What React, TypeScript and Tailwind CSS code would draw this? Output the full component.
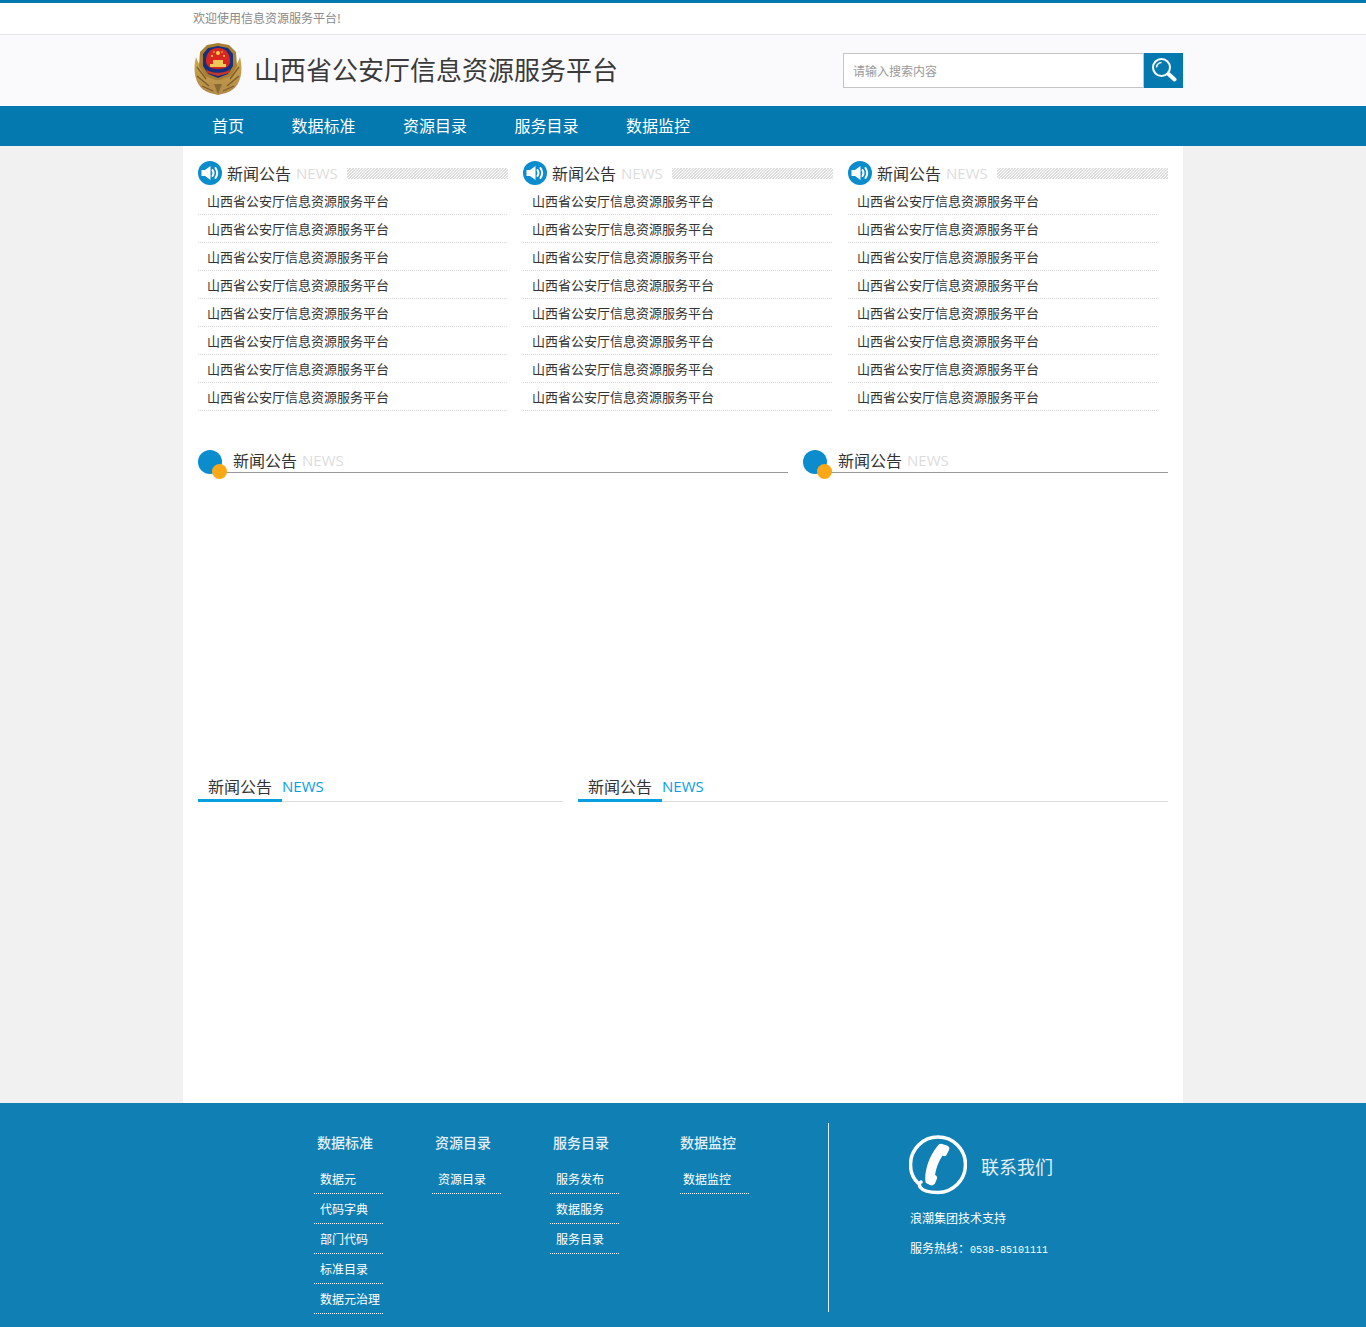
const NAV = ["首页", "数据标准", "资源目录", "服务目录", "数据监控"];
const ROWS = Array.from({ length: 8 }, (_, i) => i);

const FOOTER = [
  { title: "数据标准", box: "w-[118px]", head: "pl-[3px]", item: "pl-[6px]", items: ["数据元", "代码字典", "部门代码", "标准目录", "数据元治理"] },
  { title: "资源目录", box: "w-[118px]", head: "pl-[3px]", item: "pl-[6px]", items: ["资源目录"] },
  { title: "服务目录", box: "w-[130px]", head: "pl-[3px]", item: "pl-[6px]", items: ["服务发布", "数据服务", "服务目录"] },
  { title: "数据监控", box: "w-[69px]", head: "pl-0", item: "pl-[3px]", items: ["数据监控"] },
];

const Emblem = () => (
  <svg width="50" height="52" viewBox="0 0 50 52">
    <defs>
      <linearGradient id="gold" x1="0" y1="0" x2="0" y2="1">
        <stop offset="0" stopColor="#cfa84f" />
        <stop offset="1" stopColor="#b08a4a" />
      </linearGradient>
    </defs>
    <path d="M3 14C-1 30 3 46 17 50L25 52L33 50C47 46 51 30 47 14C44 22 40 30 25 38C10 30 6 22 3 14Z" fill="url(#gold)" />
    <path d="M4 24L13 36M4 33L16 43M9 43L20 48M46 24L37 36M46 33L34 43M41 43L30 48" stroke="#7d5c28" strokeWidth="1.3" fill="none" />
    <path d="M25 0L36 2L43 9L44 23L38 33L25 38L12 33L6 23L7 9L14 2Z" fill="#a97f34" />
    <path d="M25 3L35 5L40 11L40 23L35 31L25 35L15 31L10 23L10 11L15 5Z" fill="#17307d" />
    <path d="M25 5C33 5 37 11 37 18C37 23 33 26 25 26C17 26 13 23 13 18C13 11 17 5 25 5Z" fill="#d9271f" />
    <circle cx="25" cy="10" r="2" fill="#f3d24a" />
    <circle cx="19" cy="13" r="1" fill="#f3d24a" />
    <circle cx="31" cy="13" r="1" fill="#f3d24a" />
    <circle cx="21" cy="9" r="0.8" fill="#f3d24a" />
    <circle cx="29" cy="9" r="0.8" fill="#f3d24a" />
    <path d="M17 21H33V24H17ZM20 17H30V21H20Z" fill="#edc95a" />
    <path d="M13 26C17 31 33 31 37 26L36 30L25 33L14 30Z" fill="#c6372a" />
    <path d="M21 41L25 51L29 41Z" fill="#8a6a2e" />
  </svg>
);

const SearchIcon = () => (
  <svg width="26" height="26" viewBox="0 0 26 26" fill="none">
    <circle cx="10.5" cy="10.5" r="8.5" stroke="#fff" strokeWidth="2" />
    <path d="M5.5 10.5A5 5 0 0 1 10.5 5.5" stroke="#fff" strokeWidth="1.5" />
    <path d="M17.5 17L23.5 22.5" stroke="#fff" strokeWidth="4" strokeLinecap="round" />
  </svg>
);

const Speaker = () => (
  <span className="-mt-[2px] flex h-6 w-6 shrink-0 items-center justify-center rounded-full bg-[#0a8ccd]">
    <svg width="18" height="16" viewBox="0 0 18 16" fill="none">
      <path d="M0.5 5H4L9.5 1V15L4 11H0.5Z" fill="#fff" />
      <path d="M11.5 5C12.7 6.8 12.7 9.2 11.5 11" stroke="#fff" strokeWidth="2" strokeLinecap="round" />
      <path d="M14.5 3C16.5 6 16.5 10 14.5 13" stroke="#fff" strokeWidth="2" strokeLinecap="round" />
    </svg>
  </span>
);

const Phone = () => (
  <svg width="58" height="60" viewBox="0 0 58 60" fill="none">
    <path d="M9 48C3.5 43 1.5 36 1.5 29.5C1.5 14 14 2 29 2C44 2 56.5 14 56.5 29.5C56.5 45 44 57.5 29 57.5C22 57.5 15 57 11.5 52.5C10 50.5 10 48 12 47" stroke="#fff" strokeWidth="3.5" strokeLinecap="round" />
    <path d="M33 9L38 10.5C40 11 41 13 40 15L37.5 20C36.5 21.5 34.5 21.5 33.5 20.5C29.5 27 27 33 26 40C27.5 40.5 28.5 42 28 43.5L26 48.5C25 50 23 51 21 50L17 48C15 43 17 25 28.5 11C30 9 31.5 8.5 33 9Z" fill="#fff" />
  </svg>
);

const NewsColumn = ({ wide }: { wide?: boolean }) => (
  <div className={wide ? "w-[320px]" : "w-[310px]"}>
    <div className="flex h-[27px] items-center">
      <Speaker />
      <span className="-mt-[2px] ml-[5px] text-base text-[#333]">新闻公告</span>
      <span className="ml-[5px] font-['Open_Sans',sans-serif] text-[15px] text-[#dddddd]">NEWS</span>
      <span className="ml-[9px] h-[11px] flex-1 bg-[repeating-linear-gradient(135deg,#dedede_0,#dedede_0.9px,#ffffff_0.9px,#ffffff_2.1213px)]" />
    </div>
    <ul className="w-[309px]">
      {ROWS.map((r) => (
        <li key={r} className="h-[28px] border-b border-dotted border-[#d8d8d8] pl-[9px] text-[13px] leading-[28px] text-[#333]">
          山西省公安厅信息资源服务平台
        </li>
      ))}
    </ul>
  </div>
);

const DotHeading = ({ width }: { width: string }) => (
  <div className={`${width} relative h-[25px]`}>
    <div className="ml-[25px] flex h-[23px] items-center border-b border-[#999] pl-[10px]">
      <span className="-mt-[2px] text-base text-[#333]">新闻公告</span>
      <span className="-mt-[2px] ml-[5px] font-['Open_Sans',sans-serif] text-[15px] text-[#dddddd]">NEWS</span>
    </div>
    <span className="absolute left-0 top-0 h-6 w-6 rounded-full bg-[#0a8ccd]" />
    <span className="absolute left-[14px] top-[14px] h-[15px] w-[15px] rounded-full bg-[#fba816]" />
  </div>
);

const TabHeading = ({ width }: { width: string }) => (
  <div className={`${width} border-b border-[#dddddd]`}>
    <div className="-mb-px flex h-[28px] w-[84px] items-center border-b-[3px] border-[#069fe0] pl-[10px]">
      <span className="-mt-[2px] shrink-0 text-base text-[#333]">新闻公告</span>
      <span className="ml-[10px] shrink-0 font-['Open_Sans',sans-serif] text-[15px] text-[#069fe0]">NEWS</span>
    </div>
  </div>
);

export default function App() {
  return (
    <div className="bg-[#f1f1f1] font-['Noto_Sans_CJK_SC','Liberation_Sans',sans-serif]">
      <div className="h-[35px] border-t-[3px] border-b border-t-[#0479b0] border-b-[#e6e6e9] bg-white">
        <div className="mx-auto w-[1000px] pl-[10px] text-xs leading-[30px] text-[#888]">欢迎使用信息资源服务平台!</div>
      </div>

      <div className="h-[71px] bg-[#fafafd]">
        <div className="mx-auto flex h-full w-[1000px] items-center pl-[10px]">
          <div className="-mt-[4px]">
            <Emblem />
          </div>
          <h1 className="-mt-[4px] ml-[11px] text-[26px] font-normal leading-none text-[#3a3a3a]">山西省公安厅信息资源服务平台</h1>
          <div className="-mt-[1px] ml-auto flex h-[35px]">
            <input
              placeholder="请输入搜索内容"
              className="h-full w-[301px] border border-[#c5c5c5] bg-white pl-[9px] text-xs outline-none placeholder:text-[#999]"
            />
            <button type="button" className="flex h-full w-[39px] items-center justify-center bg-[#0479b0]">
              <SearchIcon />
            </button>
          </div>
        </div>
      </div>

      <nav className="h-10 bg-[#0479b0]">
        <div className="mx-auto flex h-[38px] w-[1000px] items-center gap-[47.5px] pl-[29px] text-base text-white">
          {NAV.map((n) => (
            <a key={n}>{n}</a>
          ))}
        </div>
      </nav>

      <main className="mx-auto h-[957px] w-[1000px] bg-white px-[15px] pt-[14px]">
        <div className="flex gap-[15px]">
          <NewsColumn />
          <NewsColumn />
          <NewsColumn wide />
        </div>
        <div className="mt-[39px] flex gap-[15px]">
          <DotHeading width="w-[590px]" />
          <DotHeading width="w-[365px]" />
        </div>
        <div className="mt-[299px] flex gap-[15px]">
          <TabHeading width="w-[365px]" />
          <TabHeading width="w-[590px]" />
        </div>
      </main>

      <footer className="h-[224px] bg-[#0f7fb4]">
        <div className="mx-auto flex w-[1000px] pt-[20px] text-white">
          <div className="ml-[131px] flex">
            {FOOTER.map((col) => (
              <div key={col.title} className={col.box}>
                <div className={`${col.head} h-[41px] whitespace-nowrap pt-[7px] text-sm font-medium leading-[24px] text-[#e3f0f7]`}>{col.title}</div>
                <ul className="w-[69px]">
                  {col.items.map((it) => (
                    <li key={it} className={`${col.item} h-[30px] whitespace-nowrap border-b border-dotted border-white text-xs leading-[29px]`}>
                      {it}
                    </li>
                  ))}
                </ul>
              </div>
            ))}
          </div>
          <div className="ml-[79px] h-[189px] w-px bg-[#dfeef6]" />
          <div className="ml-[80px] pt-[12px]">
            <div className="flex items-center">
              <Phone />
              <span className="ml-[14px] mt-[2px] text-lg text-[#e3f0f7]">联系我们</span>
            </div>
            <p className="ml-px mt-[13px] text-xs leading-[20px]">浪潮集团技术支持</p>
            <p className="ml-px mt-[10px] text-xs leading-[20px]">
              服务热线：<span className="font-['Liberation_Mono',monospace] text-[10px]">0538-85101111</span>
            </p>
          </div>
        </div>
      </footer>
    </div>
  );
}
